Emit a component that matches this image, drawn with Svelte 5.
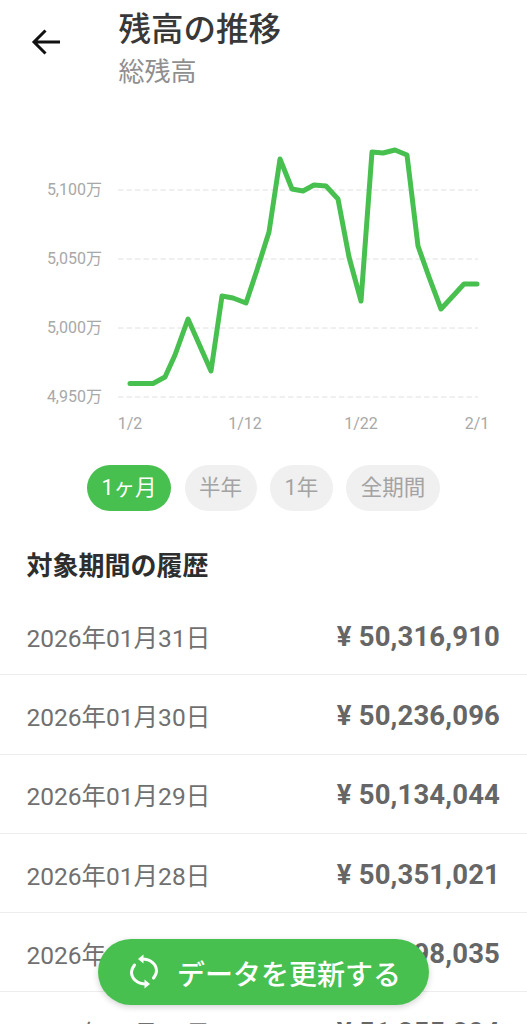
<script>
  const points = [[130,383.5],[153,383.5],[165,377],[175,355],[188,319],[211,371],[222,296],[233,298],[246,303],[257,270],[269,232],[280,159],[292,189],[303,191],[314,185],[326,186],[338,199],[349,257],[361,301],[372,152],[383,153],[395,150],[407,155],[418,246],[429,277],[441,309],[453,296],[464,284],[477,284]];
  const line = points.map((p) => p.join(',')).join(' ');
  const yAxis = [['5,100万',190],['5,050万',259],['5,000万',328],['4,950万',397]];
  const xAxis = [['1/2',130],['1/12',245],['1/22',361],['2/1',477]];
  const periods = ['1ヶ月','半年','1年','全期間'];
  const rows = [
    ['2026年01月31日','¥ 50,316,910'],
    ['2026年01月30日','¥ 50,236,096'],
    ['2026年01月29日','¥ 50,134,044'],
    ['2026年01月28日','¥ 50,351,021'],
    ['2026年01月27日','¥ 50,598,035'],
    ['2026年01月26日','¥ 51,255,894']
  ];
</script>

<div class="page">
  <header class="head">
    <button class="back" aria-label="戻る">
      <svg width="32" height="32" viewBox="0 0 32 32"><path d="M30 16H5M15.500 4.500 4 16l11.500 11.500" fill="none" stroke="#111" stroke-width="3"/></svg>
    </button>
    <div class="titles">
      <h1>残高の推移</h1>
      <p>総残高</p>
    </div>
  </header>

  <svg class="chart" width="527" height="345" viewBox="0 95 527 345">
    {#each yAxis as [label, y]}
      <line x1="118" x2="478" y1={y} y2={y} class="grid" />
      <text x="102" y={y + 5} text-anchor="end" class="tick">{label}</text>
    {/each}
    {#each xAxis as [label, x]}
      <text {x} y="429" text-anchor="middle" class="tick">{label}</text>
    {/each}
    <polyline points={line} class="series" />
  </svg>

  <div class="periods">
    {#each periods as period, i}
      <span class="pill" class:active={i === 0}>{period}</span>
    {/each}
  </div>

  <h2>対象期間の履歴</h2>

  <ul class="rows">
    {#each rows as [date, amount]}
      <li><span>{date}</span><strong>{amount}</strong></li>
    {/each}
  </ul>

  <button class="refresh">
    <svg width="28" height="36" viewBox="0 0 28 36" fill="none" stroke="#fff" stroke-width="3" stroke-linecap="round">
      <path d="M12 5C21 5 26.500 10.500 26.500 17C26.500 19.500 25 22 23.500 24" />
      <path d="M16 30C7 30 1.500 24.500 1.500 18C1.500 15.500 3 13 4.500 11" />
      <path d="M8 5 13.500 .5V9.500Z" fill="#fff" stroke="none" />
      <path d="M20 30 14.500 25.500V34.500Z" fill="#fff" stroke="none" />
    </svg>
    <span class="refresh-label">データを更新する</span>
  </button>
</div>

<style>
  :global(body) { margin: 0; background: #fff; }
  .page {
    position: relative;
    width: 527px;
    height: 1024px;
    overflow: hidden;
    background: #fff;
    font-family: Roboto, "Noto Sans CJK JP", sans-serif;
  }
  .head {
    display: flex;
    height: 95px;
    padding-left: 30px;
    box-sizing: border-box;
  }
  .back {
    width: 88.500px;
    height: 84px;
    padding: 0;
    border: 0;
    background: none;
    text-align: left;
  }
  .back svg { display: block; }
  .titles { padding-top: 7px; }
  h1 {
    margin: 0;
    font-size: 32.500px;
    line-height: 46px;
    font-weight: 500;
    color: #383838;
  }
  p {
    margin: 0;
    font-size: 26px;
    line-height: 38px;
    color: #8f8f8f;
  }
  .chart { display: block; }
  .grid { stroke: #e0e0e0; stroke-width: 1; stroke-dasharray: 5.500 3; }
  .tick { fill: #a8a8a8; font-size: 16px; }
  .series {
    fill: none;
    stroke: #47c04f;
    stroke-width: 5;
    stroke-linejoin: round;
    stroke-linecap: round;
  }
  .periods {
    display: flex;
    gap: 13.500px;
    margin: 25px 0 0 87px;
  }
  .pill {
    height: 46px;
    line-height: 46px;
    padding: 0 14.500px;
    border-radius: 23px;
    background: #f0f0f0;
    color: #a3a3a3;
    font-size: 21.500px;
  }
  .pill.active { background: #47c04f; color: #fff; }
  h2 {
    margin: 34px 0 0 26.500px;
    font-size: 26px;
    line-height: 42px;
    font-weight: 700;
    color: #2e2e2e;
  }
  .rows {
    list-style: none;
    margin: 9px 0 0;
    padding: 0;
  }
  li {
    display: flex;
    justify-content: space-between;
    align-items: center;
    height: 76.300px;
    padding: 2px 27px 0 26.500px;
    border-bottom: 1px solid #ededed;
    color: #707070;
    font-size: 24.500px;
  }
  li strong {
    font-size: 27.500px;
    font-weight: 700;
    color: #666;
    line-height: 34px;
    padding-top: 1px;
    letter-spacing: 0.15px;
  }
  .refresh {
    position: absolute;
    left: 98px;
    top: 939px;
    width: 331px;
    height: 66px;
    padding: 0 0 0 4px;
    display: flex;
    align-items: center;
    justify-content: center;
    gap: 19px;
    border: 0;
    border-radius: 33px;
    background: #47c04f;
    box-shadow: 0 2px 6px rgba(0, 0, 0, 0.18);
    color: #fff;
    font: 500 28px Roboto, "Noto Sans CJK JP", sans-serif;
  }
  .refresh-label { padding-top: 2px; }
</style>
